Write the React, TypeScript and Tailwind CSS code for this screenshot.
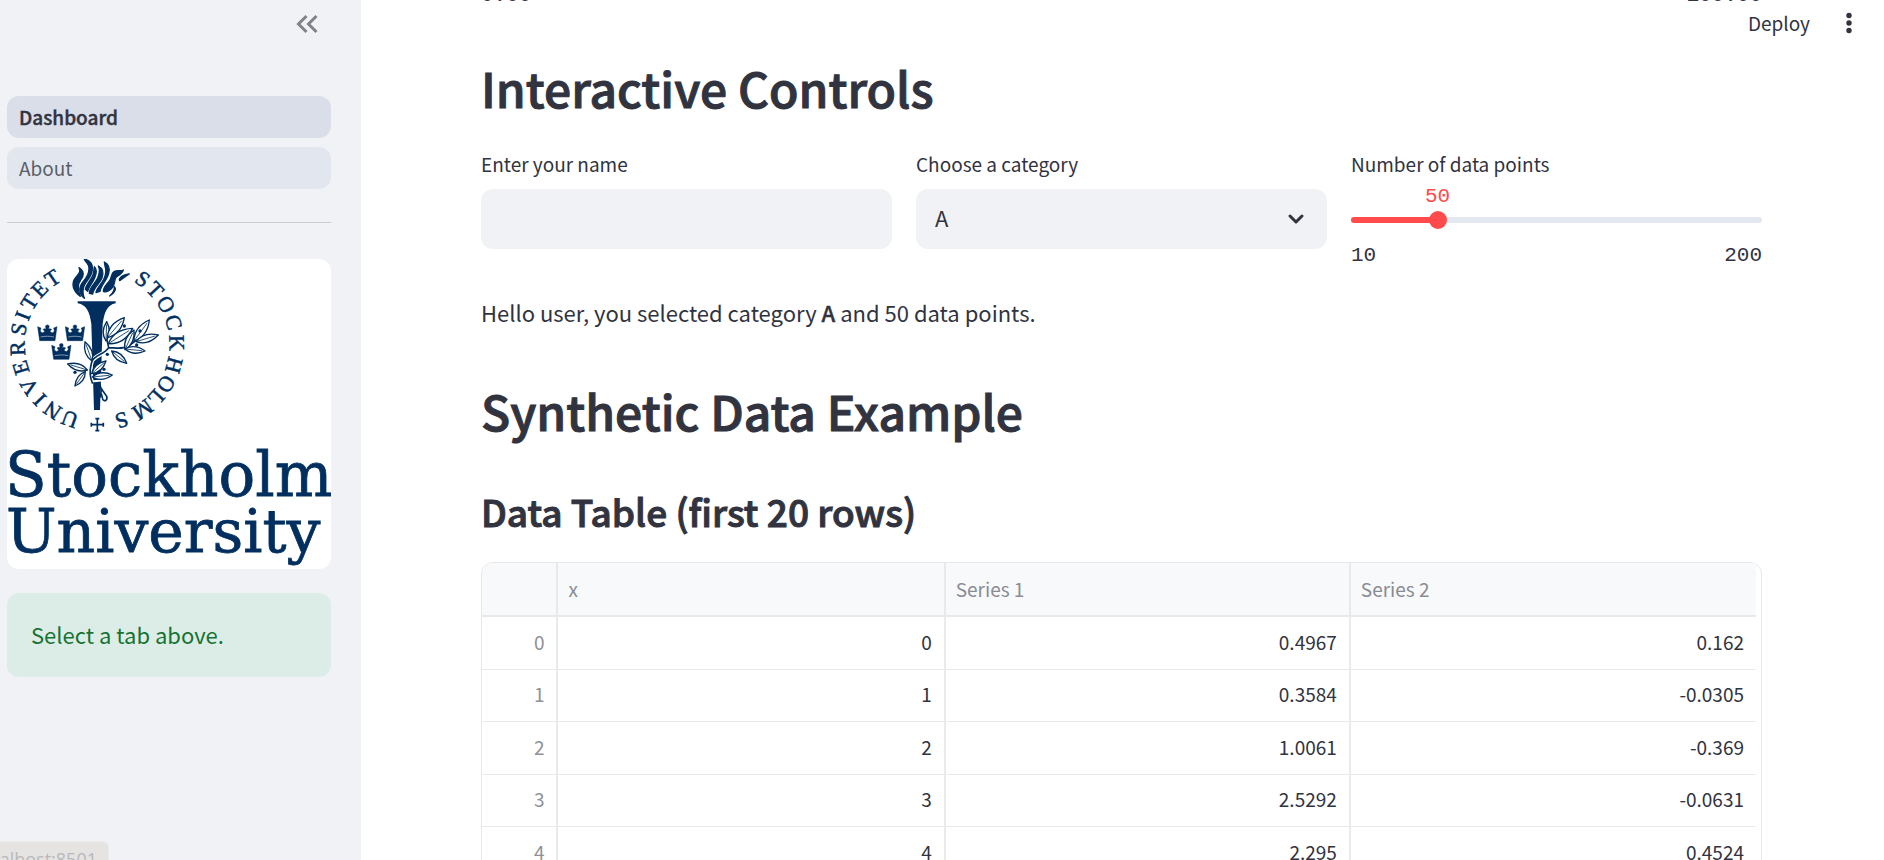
import React, { useState } from "react";

const NAVY = "#002f5f";

type Glyph = [string, number];

const SEAL_LETTERS: Glyph[] = [
  ["U", 200], ["N", 214], ["I", 226], ["V", 238], ["E", 253], ["R", 267],
  ["S", 281], ["I", 291], ["T", 302], ["E", 314], ["T", 326],
  ["S", 35], ["T", 47], ["O", 60], ["C", 74], ["K", 89],
  ["H", 105], ["O", 120], ["L", 132], ["M", 145], ["S", 162],
];

const LEAVES: [number, number, number, number][] = [
  [228, 78, 230, 20],
  [232, 68, 283, 8],
  [235, 86, 308, 40],
  [285, 104, 312, 45],
  [312, 78, 358, 15],
  [318, 80, 385, 60],
  [285, 102, 345, 108],
  [245, 108, 290, 145],
  [186, 138, 165, 80],
  [172, 165, 113, 147],
  [166, 170, 135, 213],
  [185, 176, 228, 138],
  [187, 186, 247, 180],
];

const BERRIES: [number, number][] = [
  [283, 33], [320, 90], [232, 118], [222, 163], [330, 48], [135, 172],
];

function Leaf({ x1, y1, x2, y2 }: { x1: number; y1: number; x2: number; y2: number }) {
  const dx = x2 - x1;
  const dy = y2 - y1;
  const bx = -dy * 0.32;
  const by = dx * 0.32;
  const mx = x1 + dx * 0.45;
  const my = y1 + dy * 0.45;
  return (
    <g>
      <path
        d={`M${x1} ${y1}Q${mx + bx} ${my + by} ${x2} ${y2}Q${mx - bx} ${my - by} ${x1} ${y1}Z`}
        fill="#fff"
        stroke={NAVY}
        strokeWidth="4"
        strokeLinejoin="round"
      />
      <path d={`M${x1} ${y1}L${x1 + dx * 0.85} ${y1 + dy * 0.85}`} stroke={NAVY} strokeWidth="2.5" />
    </g>
  );
}

function Crown({ x, y }: { x: number; y: number }) {
  return (
    <g transform={`translate(${x} ${y})`}>
      <path
        fill={NAVY}
        stroke={NAVY}
        strokeWidth="1.5"
        d="M0 5L6 47H52L58 5L48 9L50 17C47 25 41 25 37 19L42 13L36 11L33 12C32 9 36 6 34 2C31 -1 27 -1 24 2C22 6 26 9 25 12L22 11L16 13L21 19C17 25 11 25 8 17L10 9Z"
      />
      <path d="M9 36C22 33 36 33 49 36" stroke="#fff" strokeWidth="1.5" fill="none" />
    </g>
  );
}

function UniversityLogo() {
  return (
    <svg viewBox="0 0 324 310" className="block w-full" role="img" aria-label="Stockholm University">
      <g transform="translate(-7 -9) scale(0.33333)">
        <g
          fill={NAVY}
          stroke={NAVY}
          strokeWidth="1.5"
          fontFamily="'Liberation Serif', serif"
          fontSize="66"
          textAnchor="middle"
        >
          {SEAL_LETTERS.map(([ch, angle], i) => (
            <text key={i} x="291" y="66" transform={`rotate(${angle} 291 283)`}>
              {ch}
            </text>
          ))}
        </g>
        <g fill={NAVY} stroke={NAVY} strokeWidth="4" strokeLinejoin="round" transform="translate(192 18)">
          <path d="M49 121C28 106 20 84 34 66C44 53 52 48 45 35C62 46 60 60 50 72C38 88 42 104 49 121Z" />
          <path d="M61 127C43 112 44 92 58 76C70 62 78 48 74 30C70 20 64 18 61 9C80 14 88 28 84 46C82 62 68 74 61 88C55 101 56 114 61 127Z" />
          <path d="M64 100C67 84 82 72 87 56C90 46 90 38 91 32C98 38 98 52 92 66C86 80 76 88 71 106Z" />
          <path d="M76 112C76 94 93 84 101 66C107 52 107 38 103 30C116 36 120 50 114 66C108 82 90 92 86 114Z" />
          <path d="M96 110C96 98 113 84 120 68C126 55 128 44 123 30L121 18C134 24 138 36 134 52C130 72 112 84 108 106Z" />
          <path d="M118 106C118 92 131 84 139 70C143 60 143 51 150 47C162 40 168 48 178 42C174 54 164 58 158 62C150 68 154 84 146 94C138 104 126 110 118 106Z" />
          <path d="M137 120C146 112 152 102 151 92C158 98 152 112 137 120Z" />
          <path d="M166 70C169 62 176 57 196 54C184 60 180 66 167 74Z" />
        </g>
        <path
          fill={NAVY}
          d="M233 154H347V160C322 165 313 186 308 222L300 480H282L274 222C269 186 260 165 233 160Z"
        />
        <Crown x={113} y={225} />
        <Crown x={196} y={225} />
        <Crown x={155} y={281} />
        <g transform="translate(90 195)">
          <path d="M178 200L220 196" stroke="#fff" strokeWidth="6" />
          <path
            d="M186 200C172 172 184 150 186 138C198 120 224 118 236 98C262 98 282 108 314 78M236 98L230 70M186 138L178 112"
            fill="none"
            stroke="#fff"
            strokeWidth="12"
          />
          <path
            d="M188 206C172 172 184 150 186 138C198 118 224 118 236 98C262 98 282 108 316 78M236 98L230 70M186 138L178 112"
            fill="none"
            stroke={NAVY}
            strokeWidth="5"
          />
          {LEAVES.map(([x1, y1, x2, y2], i) => (
            <Leaf key={i} x1={x1} y1={y1} x2={x2} y2={y2} />
          ))}
          {BERRIES.map(([x, y], i) => (
            <circle key={i} cx={x} cy={y} r="5" fill={NAVY} />
          ))}
          <path
            d="M209 204L214 226L210 248M212 218L230 244C234 256 222 262 218 252L214 236"
            fill="none"
            stroke={NAVY}
            strokeWidth="5"
          />
        </g>
        <path
          d="M292 506V542M274 524H310M286 506H298M286 542H298M274 518V530M310 518V530"
          stroke={NAVY}
          strokeWidth="5"
        />
      </g>
      <g fill={NAVY} stroke={NAVY} strokeWidth="0.8" fontFamily="'DejaVu Serif', serif">
        <text x="-2" y="237" fontSize="61">Stockholm</text>
        <text x="-1" y="293" fontSize="60">University</text>
      </g>
    </svg>
  );
}

function NavLink({ label, active }: { label: string; active?: boolean }) {
  return (
    <a
      href={`#${label.toLowerCase()}`}
      aria-current={active ? "page" : undefined}
      className={
        active
          ? "flex h-[42px] items-center rounded-xl bg-[#dadee9] px-3 text-[19px] font-medium text-[#31333f] [-webkit-text-stroke:0.4px]"
          : "flex h-[42px] items-center rounded-xl bg-[#e2e7ef] px-3 text-[19px] text-[#5c5f6a]"
      }
    >
      {label}
    </a>
  );
}

function Sidebar() {
  return (
    <aside className="relative flex w-[361px] shrink-0 flex-col bg-[#f0f2f6] pr-[30px] pl-[7px]">
      <div className="flex h-12 items-center justify-end pr-3">
        <button type="button" aria-label="Collapse sidebar" className="text-[#808389]">
          <svg width="24" height="20" viewBox="0 0 24 20" fill="none" stroke="currentColor" strokeWidth="3">
            <path d="M11.5 2L3.5 10L11.5 18M21.5 2L13.5 10L21.5 18" />
          </svg>
        </button>
      </div>
      <nav className="mt-12 flex flex-col gap-[9px]">
        <NavLink label="Dashboard" active />
        <NavLink label="About" />
      </nav>
      <hr className="mt-[33px] border-[#cbcdd3]" />
      <div className="mt-9 overflow-hidden rounded-xl bg-white">
        <UniversityLogo />
      </div>
      <div role="status" className="mt-6 rounded-xl bg-[#dcede7] px-6 pt-[23px] pb-[25px] text-[22px] leading-9 text-[#177233]">
        Select a tab above.
      </div>
      <div className="absolute bottom-0 left-0 flex h-[19px] w-[109px] justify-end overflow-hidden rounded-tr-md border-t border-r border-[#ebebeb] bg-[#e5e4e2] pt-[5px] pr-[11px] font-['Open_Sans',sans-serif] text-[18px] leading-6 text-[#b9b9bb]">
        <span>localhost:8501</span>
      </div>
    </aside>
  );
}

function Controls() {
  const [name, setName] = useState("");
  const [category, setCategory] = useState("A");
  const [points, setPoints] = useState(50);
  const percent = ((points - 10) / 190) * 100;

  return (
    <>
      <div className="mt-[30px] grid grid-cols-3 gap-6">
        <div className="flex flex-col gap-2.5">
          <label htmlFor="name" className="text-[19px] leading-[30px]">Enter your name</label>
          <input
            id="name"
            type="text"
            value={name}
            onChange={(e) => setName(e.target.value)}
            className="h-[60px] w-full rounded-xl bg-[#f0f2f6] px-[19px] text-[22px] outline-none"
          />
        </div>
        <div className="flex flex-col gap-2.5">
          <label htmlFor="category" className="text-[19px] leading-[30px]">Choose a category</label>
          <div className="relative">
            <select
              id="category"
              value={category}
              onChange={(e) => setCategory(e.target.value)}
              className="h-[60px] w-full appearance-none rounded-xl bg-[#f0f2f6] px-[19px] pb-1 text-[22px] outline-none"
            >
              <option>A</option>
              <option>B</option>
              <option>C</option>
            </select>
            <svg
              className="pointer-events-none absolute top-[18px] right-[19px]"
              width="24"
              height="24"
              viewBox="0 0 24 24"
              fill="none"
              stroke="#31333f"
              strokeWidth="3"
              strokeLinecap="round"
              strokeLinejoin="round"
            >
              <path d="M6 9L12 15L18 9" />
            </svg>
          </div>
        </div>
        <div className="flex flex-col">
          <label htmlFor="points" className="text-[19px] leading-[30px]">Number of data points</label>
          <div className="relative h-7 pt-1.5 font-['Liberation_Mono',monospace] text-[21px] leading-6 text-[#ff4b4b]">
            <output htmlFor="points" className="absolute -translate-x-1/2" style={{ left: `${percent}%` }}>
              {points}
            </output>
          </div>
          <div className="relative flex h-[26px] items-center">
            <div className="h-1.5 w-full overflow-hidden rounded-full bg-[#e3e8f0]">
              <div className="h-full bg-[#ff4b4b]" style={{ width: `${percent}%` }} />
            </div>
            <input
              id="points"
              type="range"
              min={10}
              max={200}
              value={points}
              onChange={(e) => setPoints(Number(e.target.value))}
              className="absolute inset-y-0 -left-[9px] w-[calc(100%+18px)] appearance-none bg-transparent [&::-webkit-slider-thumb]:size-[18px] [&::-webkit-slider-thumb]:appearance-none [&::-webkit-slider-thumb]:rounded-full [&::-webkit-slider-thumb]:bg-[#ff4b4b]"
            />
          </div>
          <div className="mt-[11px] mb-[1px] flex justify-between font-['Liberation_Mono',monospace] text-[21px] leading-6">
            <span>10</span>
            <span>200</span>
          </div>
        </div>
      </div>
      <p className="mt-6 text-[22px] leading-[38px]">
        Hello {name || "user"}, you selected category <strong className="font-medium [-webkit-text-stroke:0.4px]">{category}</strong> and {points} data points.
      </p>
    </>
  );
}

const ROWS = [
  ["0", "0.4967", "0.162"],
  ["1", "0.3584", "-0.0305"],
  ["2", "1.0061", "-0.369"],
  ["3", "2.5292", "-0.0631"],
  ["4", "2.295", "0.4524"],
];

function DataTable() {
  return (
    <div className="mt-7 rounded-t-xl border border-[#e7e8eb] pr-[5px]">
      <table className="w-full table-fixed border-separate border-spacing-0 text-[19px]">
        <colgroup>
          <col className="w-[6%]" />
          <col className="w-[30.4%]" />
          <col className="w-[31.8%]" />
          <col />
        </colgroup>
        <thead>
          <tr className="h-[54px] bg-[#f8f9fb] text-left text-[#8a8c94]">
            <th className="rounded-tl-xl border-r-2 border-b-2 border-[#e8e9ed]" />
            <th className="border-r-2 border-b-2 border-[#e8e9ed] px-2.5 font-normal">x</th>
            <th className="border-r-2 border-b-2 border-[#e8e9ed] px-2.5 font-normal">Series 1</th>
            <th className="border-b-2 border-[#e8e9ed] px-2.5 font-normal">Series 2</th>
          </tr>
        </thead>
        <tbody>
          {ROWS.map(([x, s1, s2]) => (
            <tr key={x} className="h-[52px] text-right odd:h-[53px]">
              <td className="border-r-2 border-b border-[#e9eaed] px-3 pb-0.5 text-[#8f9199]">{x}</td>
              <td className="border-r-2 border-b border-[#e9eaed] px-3 pb-0.5">{x}</td>
              <td className="border-r-2 border-b border-[#e9eaed] px-3 pb-0.5">{s1}</td>
              <td className="border-b border-[#e9eaed] px-3 pb-0.5">{s2}</td>
            </tr>
          ))}
        </tbody>
      </table>
    </div>
  );
}

export default function App() {
  return (
    <div className="flex h-screen overflow-hidden bg-white font-['Noto_Sans_CJK_SC','Noto_Sans',sans-serif] text-[#31333f]">
      <Sidebar />
      <main className="relative min-w-0 flex-1 overflow-hidden pr-[122px] pl-[120px]">
        <header className="absolute top-0 right-0 flex h-[46px] items-center gap-[27px] pr-[23px]">
          <button type="button" className="text-[19px] leading-7">Deploy</button>
          <button type="button" aria-label="Main menu">
            <svg width="24" height="24" viewBox="0 0 24 24" fill="#31333f">
              <circle cx="12" cy="4.5" r="2.7" />
              <circle cx="12" cy="12" r="2.7" />
              <circle cx="12" cy="19.5" r="2.7" />
            </svg>
          </button>
        </header>
        <div className="flex h-[3px] items-end justify-between font-['Liberation_Mono',monospace] text-[21px] leading-[14px]">
          <span>0.00</span>
          <span>100.00</span>
        </div>
        <h1 className="mt-[52px] text-[48px] leading-[64px] font-medium [-webkit-text-stroke:1px]">Interactive Controls</h1>
        <Controls />
        <h1 className="mt-[47px] text-[48px] leading-[64px] font-medium [-webkit-text-stroke:1px]">Synthetic Data Example</h1>
        <h2 className="mt-[46px] text-[37px] leading-[46px] font-medium [-webkit-text-stroke:1px]">Data Table (first 20 rows)</h2>
        <DataTable />
      </main>
    </div>
  );
}
